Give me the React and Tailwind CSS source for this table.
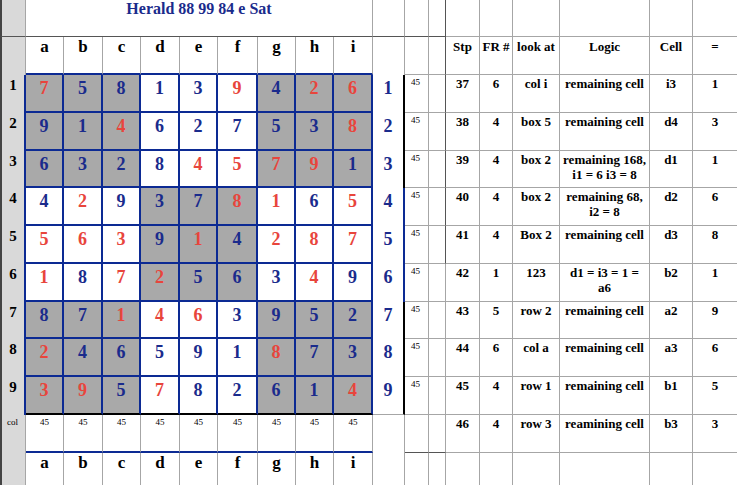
const BOARD = [
  '7r 5 8 1 3 9r 4 2r 6r',
  '9 1 4r 6 2 7 5 3 8r',
  '6 3 2 8 4r 5r 7r 9r 1',
  '4 2r 9 3 7 8r 1r 6 5r',
  '5r 6r 3r 9 1r 4 2r 8r 7r',
  '1r 8 7r 2r 5 6 3 4r 9',
  '8 7 1r 4r 6r 3 9 5 2',
  '2r 4 6 5 9 1 8r 7 3',
  '3r 9r 5 7r 8 2 6 1 4r',
]

const LETTERS = ['a', 'b', 'c', 'd', 'e', 'f', 'g', 'h', 'i']

// Stp, FR #, look at, Logic (lines), Cell, =
const STEPS = [
  ['37', '6', 'col i', ['remaining cell'], 'i3', '1'],
  ['38', '4', 'box 5', ['remaining cell'], 'd4', '3'],
  ['39', '4', 'box 2', ['remaining 168,', 'i1 = 6 i3 = 8'], 'd1', '1'],
  ['40', '4', 'box 2', ['remaining 68,', 'i2 = 8'], 'd2', '6'],
  ['41', '4', 'Box 2', ['remaining cell'], 'd3', '8'],
  ['42', '1', '123', ['d1 = i3 = 1 =', 'a6'], 'b2', '1'],
  ['43', '5', 'row 2', ['remaining cell'], 'a2', '9'],
  ['44', '6', 'col a', ['remaining cell'], 'a3', '6'],
  ['45', '4', 'row 1', ['remaining cell'], 'b1', '5'],
  ['46', '4', 'row 3', ['reamining cell'], 'b3', '3'],
]

const HEADERS = ['Stp', 'FR #', 'look at', 'Logic', 'Cell', '=']

const GRIDR = 'border-r border-r-[#a6a6a6]'
const GRIDB = 'border-b border-b-[#a6a6a6]'
const DARKR = 'border-r border-r-[#555555]'
const DARKB = 'border-b border-b-[#555555]'
const BLUER = 'border-r-2 border-r-[#0c2a93]'
const BLUEB = 'border-b-2 border-b-[#0c2a93]'
const BLACKR = 'border-r-2 border-r-black'
const BLACKB = 'border-b-2 border-b-black'
const ROWHEAD = 'bg-[#d9d9d9] border-l-2 border-l-[#444444]'

const BLUE_TEXT = 'text-[#1a2b8c]'
const RED_TEXT = 'text-[#e8453c]'

function StepCells({ step, last }) {
  return step.map((val, i) => {
    const right = i === 5 ? '' : GRIDR
    const lines = Array.isArray(val) ? val : [val]
    return (
      <div key={i} className={`${right} ${GRIDB} text-center text-[13px] font-bold leading-[15px] pt-[1px] text-black`}>
        {lines.map((l, j) => (
          <div key={j}>{l}</div>
        ))}
      </div>
    )
  })
}

function SudokuRow({ r }) {
  const cells = BOARD[r].split(' ')
  const middleBand = r >= 3 && r <= 5
  return (
    <>
      <div className={`${ROWHEAD} ${BLUER} text-center text-[15px] font-bold leading-[16px] pt-[2px] text-black`}>
        {r + 1}
      </div>
      {cells.map((tok, c) => {
        const red = tok.endsWith('r')
        const shaded = (Math.floor(r / 3) + Math.floor(c / 3)) % 2 === 0
        return (
          <div
            key={c}
            className={`${BLUER} ${r === 8 ? BLACKB : BLUEB} ${shaded ? 'bg-[#a9a9a9]' : 'bg-white'} ${red ? RED_TEXT : BLUE_TEXT} text-center text-[18px] font-bold leading-[18px] pt-[4px]`}
          >
            {tok[0]}
          </div>
        )
      })}
      <div className={`${middleBand ? BLUER : BLACKR} ${r === 8 ? GRIDB : ''} ${BLUE_TEXT} text-center text-[18px] font-bold leading-[18px] pt-[4px]`}>
        {r + 1}
      </div>
      <div className={`${GRIDR} ${GRIDB} text-[9px] leading-[10px] pt-[2px] pl-[6px] text-black`}>45</div>
      <div className={`${r <= 4 ? DARKR : GRIDR} ${GRIDB}`} />
      <StepCells step={STEPS[r]} />
    </>
  )
}

export default function App() {
  return (
    <div className="w-[737px] h-[485px] overflow-hidden bg-white font-['Liberation_Serif',serif]">
      <div className="grid grid-cols-[26px_38px_39px_38px_39px_38px_40px_38px_38px_39px_32px_24px_17px_34px_33px_47px_90px_43px_44px] grid-rows-[37px_38px_38px_38px_37px_38px_38px_38px_37px_38px_38px_38px_32px]">
        {/* título */}
        <div className={`${ROWHEAD} ${GRIDR} ${DARKB}`} />
        <div className={`col-span-9 ${GRIDR} ${DARKB} ${BLUE_TEXT} text-center text-[16px] font-bold leading-[18px]`}>
          Herald 88 99 84 e Sat
        </div>
        <div className={`${GRIDR} ${DARKB}`} />
        <div className={`${GRIDR} ${DARKB}`} />
        <div className={`${DARKR} ${DARKB}`} />
        {HEADERS.map((h, i) => (
          <div key={i} className={`${i === 5 ? '' : GRIDR} ${GRIDB}`} />
        ))}

        {/* letras de columna */}
        <div className={`${ROWHEAD} ${GRIDR}`} />
        {LETTERS.map((l) => (
          <div key={l} className={`${GRIDR} ${BLUEB} text-center text-[17px] font-bold leading-[18px] pt-[1px] text-black`}>
            {l}
          </div>
        ))}
        <div className={GRIDR} />
        <div className={`${GRIDR} ${GRIDB}`} />
        <div className={`${DARKR} ${GRIDB}`} />
        {HEADERS.map((h, i) => (
          <div key={i} className={`${i === 5 ? '' : GRIDR} ${GRIDB} text-center text-[13px] font-bold leading-[15px] pt-[2px] text-black`}>
            {h}
          </div>
        ))}

        {BOARD.map((_, r) => (
          <SudokuRow key={r} r={r} />
        ))}

        {/* fila col */}
        <div className={`${ROWHEAD} ${GRIDR} text-[9px] leading-[10px] pt-[2px] pl-[5px] text-black`}>col</div>
        {LETTERS.map((l) => (
          <div key={l} className={`${GRIDR} ${BLUEB} text-center text-[9px] leading-[10px] pt-[2px] text-black`}>
            45
          </div>
        ))}
        <div className={GRIDR} />
        <div className={`${GRIDR} ${DARKB}`} />
        <div className={`${GRIDR} ${DARKB}`} />
        <StepCells step={STEPS[9]} />

        {/* letras abajo */}
        <div className={`${ROWHEAD} ${GRIDR}`} />
        {LETTERS.map((l) => (
          <div key={l} className={`${GRIDR} text-center text-[17px] font-bold leading-[18px] pt-[1px] text-black`}>
            {l}
          </div>
        ))}
        <div className={GRIDR} />
        <div className={GRIDR} />
        <div className={GRIDR} />
        {HEADERS.map((h, i) => (
          <div key={i} className={i === 5 ? '' : GRIDR} />
        ))}
      </div>
    </div>
  )
}
